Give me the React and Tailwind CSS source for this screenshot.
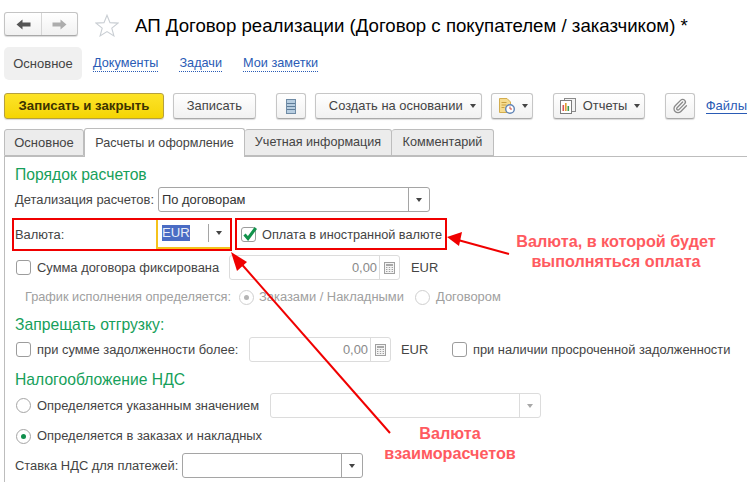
import { Paperclip } from "lucide-react";

function Caret({ light }) {
  return (
    <span
      className={`w-0 h-0 border-l-[3.5px] border-r-[3.5px] border-t-[4px] border-l-transparent border-r-transparent ${
        light ? "border-t-[#a8a8a8]" : "border-t-[#444]"
      }`}
    />
  );
}

function Button({ w, ml, start, children }) {
  return (
    <div
      className={`h-[26px] flex items-center gap-[7px] rounded-[3px] border border-[#c6c6c6] border-b-[#a9a9a9] bg-gradient-to-b from-white to-[#f1f1f1] shadow-[0_1px_1px_rgba(0,0,0,0.15)] text-[12.9px] text-[#444] ${w} ${ml} ${
        start || "justify-center"
      }`}
    >
      {children}
    </div>
  );
}

function Tab({ w, active, size, children }) {
  return (
    <div
      className={`flex items-center justify-center border border-[#bdbdbd] rounded-t-[3px] text-[#444] ${w} ${size} ${
        active ? "h-[29px] -mb-px bg-white border-b-0 z-10" : "h-[27px] bg-[#ececec] border-l-0 first:border-l"
      }`}
    >
      {children}
    </div>
  );
}

function Heading({ mt, children }) {
  return <div className={`h-5 flex items-center pl-[10px] text-[15.7px] leading-5 text-[#16a05a] ${mt}`}>{children}</div>;
}

function Check({ checked }) {
  return (
    <span className="relative w-[15px] h-[15px] shrink-0 rounded-[3px] border border-[#9c9c9c] bg-white">
      {checked && (
        <svg className="absolute -top-[2px] left-0" width="16" height="16" viewBox="0 0 16 16">
          <path d="M2.5 8.5 L6 12.5 L13.8 2" fill="none" stroke="#12924b" strokeWidth="3" />
        </svg>
      )}
    </span>
  );
}

function Radio({ checked, muted }) {
  return (
    <span
      className={`w-[15px] h-[15px] shrink-0 rounded-full border bg-white flex items-center justify-center ${
        muted ? "border-[#cfcfcf]" : "border-[#a5a5a5]"
      }`}
    >
      {checked && <span className={`w-[5px] h-[5px] rounded-full ${muted ? "bg-[#b5b5b5]" : "bg-[#0f8f4c]"}`} />}
    </span>
  );
}

function CalcIcon() {
  return (
    <svg width="11" height="12" viewBox="0 0 11 12" className="shrink-0">
      <rect x="0.5" y="0.5" width="10" height="11" fill="#f4f4f4" stroke="#a0a0a0" />
      <rect x="2" y="2" width="7" height="2" fill="#a8a8a8" />
      <path d="M2 5.5h1.4M4.8 5.5h1.4M7.6 5.5H9M2 7.5h1.4M4.8 7.5h1.4M7.6 7.5H9M2 9.5h1.4M4.8 9.5h1.4M7.6 9.5H9" stroke="#a0a0a0" />
    </svg>
  );
}

function AmountField({ w }) {
  return (
    <div className={`h-[25px] flex rounded-[3px] border border-[#dcdcdc] bg-white ${w}`}>
      <div className="flex-1 flex items-center justify-end pr-[2px] text-[#8a8a8a]">0,00</div>
      <div className="w-[20px] border-l border-[#dcdcdc] flex items-center justify-center">
        <CalcIcon />
      </div>
    </div>
  );
}

function SelectField({ w, value, light }) {
  return (
    <div
      className={`h-[25px] flex rounded-[3px] border bg-white ${w} ${light ? "border-[#dcdcdc]" : "border-[#a5a5a5]"}`}
    >
      <div className="flex-1 flex items-center pl-[3px] text-[#333]">{value}</div>
      <div
        className={`w-[21px] border-l flex items-center justify-center ${light ? "border-[#dcdcdc]" : "border-[#a5a5a5]"}`}
      >
        <Caret light={light} />
      </div>
    </div>
  );
}

function Annotations() {
  return (
    <>
      <div className="absolute left-[12px] top-[218px] w-[220px] h-[33px] border-[2px] border-[#f00000]" />
      <div className="absolute left-[235px] top-[218px] w-[212px] h-[32px] border-[2px] border-[#f00000]" />
      <svg className="absolute inset-0 pointer-events-none" width="747" height="482" viewBox="0 0 747 482">
        <line x1="390" y1="433" x2="238" y2="260" stroke="#f00000" strokeWidth="2" />
        <polygon points="231,252 247,262 237,271" fill="#f00000" />
        <line x1="509" y1="254" x2="458" y2="240" stroke="#f00000" strokeWidth="2" />
        <polygon points="447,237 462,232 459,246" fill="#f00000" />
      </svg>
      <div className="absolute left-[500px] top-[231px] w-[232px] text-center text-[16.2px] leading-[20px] font-bold text-[#ff5a60]">
        Валюта, в которой будет
        <br />
        выполняться оплата
      </div>
      <div className="absolute left-[370px] top-[423px] w-[160px] text-center text-[16.2px] leading-[20px] font-bold text-[#ff5a60]">
        Валюта
        <br />
        взаиморасчетов
      </div>
    </>
  );
}

export default function App() {
  return (
    <div className="relative w-[747px] h-[482px] overflow-hidden bg-white font-['Liberation_Sans',Arial,sans-serif] text-[#444] pt-3">
      {/* заголовок */}
      <div className="flex items-start h-6 ml-1">
        <div className="w-[74px] h-[24px] flex rounded-[3px] border border-[#c4c4c4] border-b-[#a9a9a9] bg-gradient-to-b from-white to-[#f1f1f1] shadow-[0_1px_1px_rgba(0,0,0,0.15)]">
          <div className="w-[37px] border-r border-[#d6d6d6] flex items-center justify-center">
            <svg width="15" height="11" viewBox="0 0 15 11">
              <path d="M0.5 5.5 L6.5 0.5 V3.5 H14.5 V7.5 H6.5 V10.5 Z" fill="#555" />
            </svg>
          </div>
          <div className="flex-1 flex items-center justify-center">
            <svg width="15" height="11" viewBox="0 0 15 11">
              <path d="M14.5 5.5 L8.5 0.5 V3.5 H0.5 V7.5 H8.5 V10.5 Z" fill="#adadad" />
            </svg>
          </div>
        </div>
        <svg className="ml-[17px] mt-[2px]" width="24" height="23" viewBox="0 0 24 23">
          <path
            d="M12 1.2 L15 8.6 L23 9.1 L16.8 14.2 L18.9 21.9 L12 17.6 L5.1 21.9 L7.2 14.2 L1 9.1 L9 8.6 Z"
            fill="white"
            stroke="#c9ced3"
            strokeWidth="1.1"
          />
        </svg>
        <div className="ml-[16px] mt-[2px] text-[18.67px] leading-6 text-black whitespace-nowrap">
          АП Договор реализации (Договор с покупателем / заказчиком) *
        </div>
      </div>

      {/* разделы */}
      <div className="flex items-center h-[33px] mt-[11px] ml-1">
        <div className="w-[78px] h-[33px] rounded-[5px] bg-[#f0f0f0] flex items-center justify-center text-[13px] text-[#444]">
          Основное
        </div>
        {["Документы", "Задачи", "Мои заметки"].map((t, i) => (
          <span
            key={t}
            className={`text-[12.7px] leading-[15px] text-[#2a5bb5] border-b border-dotted border-[#2a5bb5] ${
              i === 0 ? "ml-[11px]" : "ml-[21px]"
            }`}
          >
            {t}
          </span>
        ))}
      </div>

      {/* командная панель */}
      <div className="flex items-center h-[26px] mt-[13px] ml-1">
        <div className="w-[160px] h-[26px] flex items-center justify-center rounded-[3px] border border-[#b5a040] bg-gradient-to-b from-[#fde326] to-[#f5d500] shadow-[0_1px_1px_rgba(0,0,0,0.15)] text-[13.2px] font-bold text-[#3d3300]">
          Записать и закрыть
        </div>
        <Button w="w-[83px]" ml="ml-[9px]">Записать</Button>
        <Button w="w-[30px]" ml="ml-[20px]">
          <svg width="10" height="15" viewBox="0 0 10 15">
            <rect x="0.5" y="0.5" width="9" height="14" fill="#b7cde0" stroke="#6f8ba5" />
            <path d="M1 4.5h8M1 7.5h8M1 10.5h8" stroke="#5f7d99" />
          </svg>
        </Button>
        <Button w="w-[167px]" ml="ml-[9px]" start="pl-[13px]">
          Создать на основании
          <Caret />
        </Button>
        <Button w="w-[42px]" ml="ml-[9px]" start="pl-[7px]">
          <svg width="16" height="16" viewBox="0 0 16 16">
            <path d="M0.5 0.5 H8 L11.5 4 V14.5 H0.5 Z" fill="#f6dc90" stroke="#d3ad4e" />
            <path d="M2.5 4.5h5M2.5 7h5M2.5 9.5h3" stroke="#c9a040" />
            <circle cx="11" cy="11" r="4.3" fill="white" stroke="#5f83b5" strokeWidth="1.4" />
            <path d="M11 8.5V11H13" stroke="#d04a3a" fill="none" />
          </svg>
          <Caret />
        </Button>
        <Button w="w-[92px]" ml="ml-[20px]" start="pl-[6px]">
          <svg width="16" height="16" viewBox="0 0 16 16">
            <rect x="4.5" y="0.5" width="11" height="13" fill="#f3f3f3" stroke="#8b8b8b" />
            <rect x="0.5" y="2.5" width="11" height="13" fill="white" stroke="#7d7d7d" />
            <rect x="2.5" y="7" width="1.6" height="6" fill="#d9534f" />
            <rect x="5" y="5" width="1.6" height="8" fill="#e0a030" />
            <rect x="7.5" y="8" width="1.6" height="5" fill="#3f9a4f" />
          </svg>
          Отчеты
          <Caret />
        </Button>
        <Button w="w-[30px]" ml="ml-[20px]">
          <Paperclip size={16} strokeWidth={2} color="#8a8a8a" />
        </Button>
        <span className="ml-[11px] text-[13px] leading-[15px] text-[#2a5bb5] border-b border-[#2a5bb5] whitespace-nowrap">
          Файлы
        </span>
      </div>

      {/* вкладки */}
      <div className="flex items-end h-[27px] mt-[10px] ml-1">
        <Tab w="w-[80px]" size="text-[13px]">Основное</Tab>
        <Tab w="w-[161px]" size="text-[12.6px]" active>Расчеты и оформление</Tab>
        <Tab w="w-[147px]" size="text-[12.6px]">Учетная информация</Tab>
        <Tab w="w-[102px]" size="text-[12.7px]">Комментарий</Tab>
      </div>

      {/* содержимое вкладки */}
      <div className="ml-1 border-l border-t border-[#bdbdbd] h-[326px] text-[12.92px]">
        <Heading mt="mt-[8px]">Порядок расчетов</Heading>

        <div className="flex items-center h-[25px] mt-[2px] pl-[10px]">
          <div className="w-[143px]">Детализация расчетов:</div>
          <SelectField w="w-[272px]" value="По договорам" />
        </div>

        <div className="flex h-[31px] mt-[7px] pl-[10px]">
          <div className="w-[141px] flex items-center">Валюта:</div>
          <div className="w-[75px] h-[30px] flex items-center border-l-[2px] border-b-[2px] border-[#f5c21b]">
            <div className="w-[50px] pl-[4px] text-[13.2px]">
              <span className="inline-block bg-[#4a6cc4] text-[#e8ecf8] leading-[16px]">EUR</span>
            </div>
            <div className="h-[18px] w-[21px] border-l border-[#a5a5a5] flex items-center justify-center">
              <Caret />
            </div>
          </div>
          <div className="ml-[10px] flex items-center gap-[6px] text-[12.72px] text-[#444]">
            <Check checked />
            Оплата в иностранной валюте
          </div>
        </div>

        <div className="flex items-center h-[25px] mt-[5px] pl-[11px]">
          <div className="w-[213px] flex items-center gap-[6px]">
            <Check />
            Сумма договора фиксирована
          </div>
          <AmountField w="w-[171px]" />
          <span className="ml-[11px]">EUR</span>
        </div>

        <div className="flex items-center h-5 mt-[7px] pl-[20px] text-[#a0a0a0]">
          <div className="w-[214px] text-[12.75px]">График исполнения определяется:</div>
          <Radio checked muted />
          <div className="w-[156px] ml-[5px]">Заказами / Накладными</div>
          <Radio muted />
          <div className="ml-[6px]">Договором</div>
        </div>

        <Heading mt="mt-[8px]">Запрещать отгрузку:</Heading>

        <div className="flex items-center h-[25px] mt-[2px] pl-[11px]">
          <div className="w-[233px] flex items-center gap-[6px]">
            <Check />
            при сумме задолженности более:
          </div>
          <AmountField w="w-[142px]" />
          <span className="ml-[10px] w-[51px]">EUR</span>
          <div className="flex items-center gap-[6px] text-[12.85px] whitespace-nowrap">
            <Check />
            при наличии просроченной задолженности
          </div>
        </div>

        <Heading mt="mt-[8px]">Налогообложение НДС</Heading>

        <div className="flex items-center h-[25px] mt-[3px] pl-[11px]">
          <div className="w-[254px] flex items-center gap-[6px]">
            <Radio />
            Определяется указанным значением
          </div>
          <SelectField w="w-[271px]" light />
        </div>

        <div className="flex items-center h-5 mt-[8px] pl-[11px] gap-[6px]">
          <Radio checked />
          Определяется в заказах и накладных
        </div>

        <div className="flex items-center h-[25px] mt-[7px] pl-[10px]">
          <div className="w-[167px]">Ставка НДС для платежей:</div>
          <SelectField w="w-[181px]" />
        </div>
      </div>

      <Annotations />
    </div>
  );
}
